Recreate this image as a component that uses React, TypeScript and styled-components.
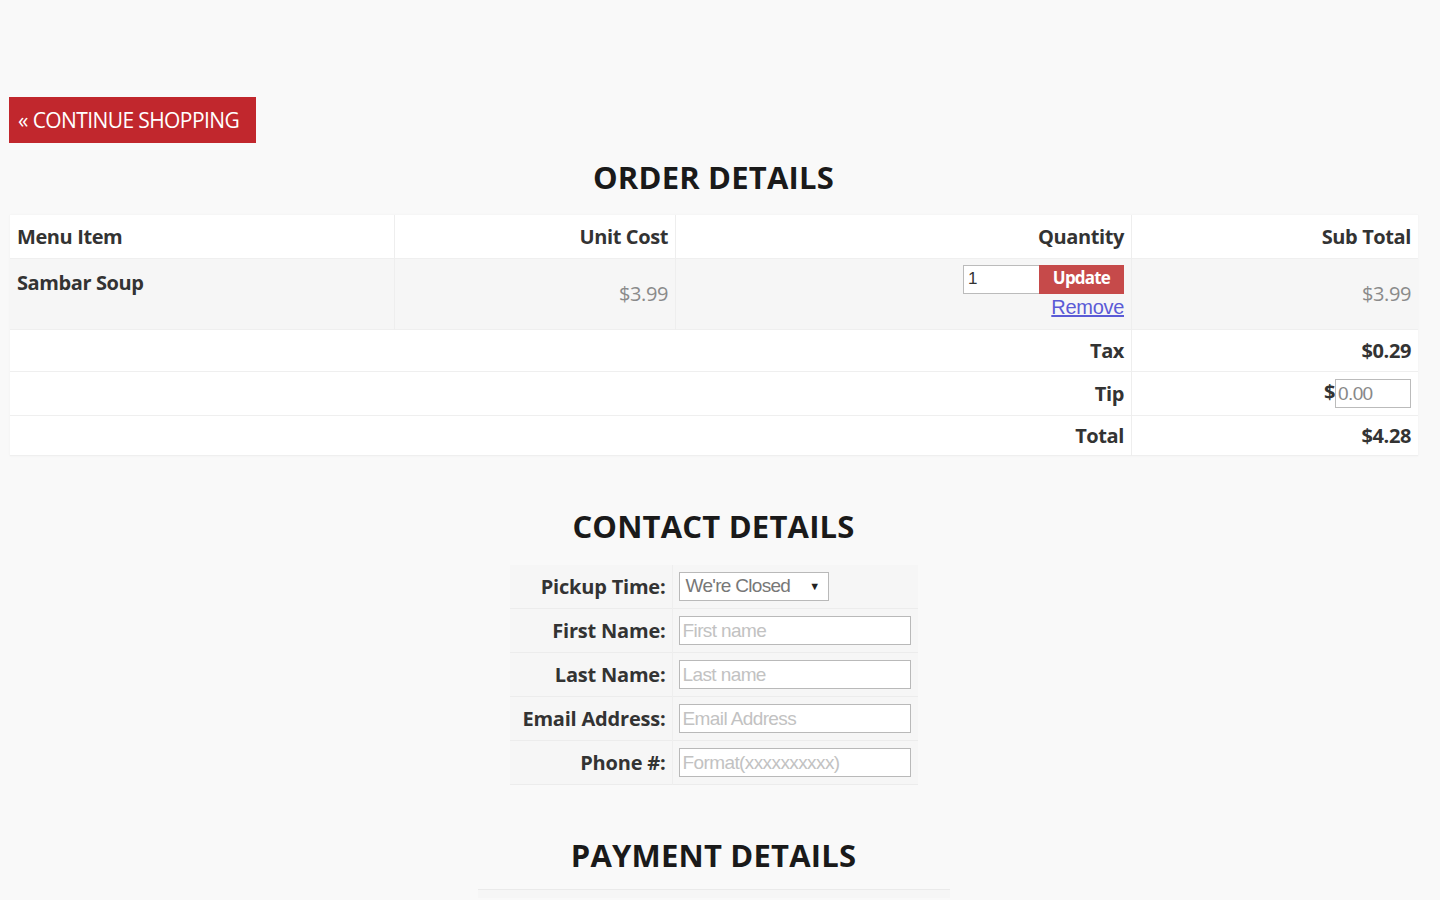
import styled, { createGlobalStyle } from "styled-components";

const GlobalStyle = createGlobalStyle`
  html, body {
    margin: 0;
    padding: 0;
    background: #f9f9f9;
  }
  body {
    font-family: "Open Sans", "Liberation Sans", sans-serif;
    color: #2b2b2b;
  }
`;

const Page = styled.div`
  width: 1440px;
  height: 900px;
  overflow: hidden;
  padding: 97px 22px 0 9px;
  box-sizing: border-box;
`;

const BackButton = styled.button`
  display: block;
  width: 247px;
  height: 46px;
  padding: 0 0 0 9px;
  border: none;
  background: #c1272d;
  color: #fff;
  font-family: "Open Sans", sans-serif;
  font-size: 21px;
  letter-spacing: -0.6px;
  text-align: left;
  cursor: pointer;
`;

const Heading = styled.h2<{ $top: number }>`
  margin: ${(p) => p.$top}px 0 0;
  text-align: center;
  font-size: 31px;
  font-weight: 700;
  line-height: 40px;
  color: #1a1a1a;
  letter-spacing: 0.2px;
`;

const OrderTable = styled.table`
  margin: 18px 0 0 1px;
  width: 1408px;
  border-collapse: collapse;
  background: #fff;
  font-size: 20px;
  box-shadow: 0 0 2px #eee;
`;

const Row = styled.tr<{ $shade?: boolean; $height: number }>`
  height: ${(p) => p.$height}px;
  background: ${(p) => (p.$shade ? "#f6f6f6" : "#fff")};
  border-bottom: 1px solid #efefef;
`;

const Cell = styled.td<{ $align?: string; $bold?: boolean; $muted?: boolean; $width?: number; $top?: number }>`
  width: ${(p) => (p.$width ? `${p.$width}px` : "auto")};
  padding: ${(p) => (p.$top ? `${p.$top}px 7px 0` : "0 7px")};
  vertical-align: ${(p) => (p.$top ? "top" : "middle")};
  text-align: ${(p) => p.$align || "left"};
  font-weight: ${(p) => (p.$bold ? 700 : 400)};
  color: ${(p) => (p.$muted ? "#8a8a8a" : "#333")};
  border-right: 1px solid #eeeeee;
  letter-spacing: -0.4px;
  &:last-child {
    border-right: none;
  }
`;

const QtyBox = styled.div`
  display: flex;
  flex-direction: column;
  align-items: flex-end;
  gap: 2px;
`;

const QtyLine = styled.div`
  display: flex;
  align-items: stretch;
  height: 29px;
`;

const QtyInput = styled.input`
  width: 76px;
  box-sizing: border-box;
  border: 1px solid #bbb;
  border-right: none;
  font-family: "Liberation Sans", Arial, sans-serif;
  font-size: 17px;
  padding: 0 4px;
  color: #333;
  background: #fff;
`;

const UpdateButton = styled.button`
  width: 85px;
  border: none;
  background: #c64a4a;
  color: #fff;
  font-family: "Open Sans", sans-serif;
  font-weight: 700;
  font-size: 17px;
  letter-spacing: -0.8px;
  padding: 0 0 4px;
`;

const RemoveLink = styled.a`
  color: #5b5bd6;
  text-decoration: underline;
  font-family: "Liberation Sans", Arial, sans-serif;
  font-size: 20px;
  letter-spacing: -0.3px;
  cursor: pointer;
`;

const TipInput = styled.input`
  width: 76px;
  height: 29px;
  box-sizing: border-box;
  border: 1px solid #bbb;
  font-family: "Liberation Sans", Arial, sans-serif;
  font-size: 19px;
  color: #888;
  padding: 0 2px;
  vertical-align: middle;
  background: #fff;
  letter-spacing: -0.6px;
`;

const ContactTable = styled.table`
  margin: 19px auto 0;
  border-collapse: collapse;
  background: #f6f6f6;
  position: relative;
  left: 0px;
`;

const FormRow = styled.tr`
  height: 44px;
  border-bottom: 1px solid #ececec;
`;

const Label = styled.td`
  width: 148px;
  padding: 0 6px 0 8px;
  text-align: right;
  font-weight: 700;
  font-size: 20px;
  letter-spacing: -0.2px;
  color: #333;
  border-right: 1px solid #eeeeee;
`;

const Field = styled.td`
  width: 232px;
  padding: 0 7px 0 6px;
`;

const TextInput = styled.input`
  width: 232px;
  height: 29px;
  box-sizing: border-box;
  border: 1px solid #b9b9b9;
  background: #fff;
  font-family: "Liberation Sans", Arial, sans-serif;
  font-size: 19px;
  padding: 0 3px;
  letter-spacing: -0.6px;
  &::placeholder {
    color: #c2c2c2;
  }
`;

const SelectBox = styled.div`
  width: 150px;
  height: 29px;
  box-sizing: border-box;
  border: 1px solid #b9b9b9;
  background: #fff;
  display: flex;
  align-items: center;
  justify-content: space-between;
  padding: 0 8px 0 6px;
  font-family: "Liberation Sans", Arial, sans-serif;
  font-size: 19px;
  color: #777;
  letter-spacing: -0.7px;
`;

const Caret = styled.span`
  font-size: 11px;
  color: #222;
`;

const PaymentEdge = styled.div`
  margin: 14px auto 0;
  width: 472px;
  height: 8px;
  border-top: 1px solid #eaeaea;
  background: #f6f6f6;
`;

export default function App() {
  return (
    <>
      <GlobalStyle />
      <Page>
        <BackButton>« CONTINUE SHOPPING</BackButton>

        <Heading $top={14}>ORDER DETAILS</Heading>
        <OrderTable>
          <tbody>
            <Row $height={43}>
              <Cell $bold $width={370}>Menu Item</Cell>
              <Cell $bold $align="right" $width={266}>Unit Cost</Cell>
              <Cell $bold $align="right" $width={441}>Quantity</Cell>
              <Cell $bold $align="right">Sub Total</Cell>
            </Row>
            <Row $height={71} $shade>
              <Cell $bold $top={10}>Sambar Soup</Cell>
              <Cell $muted $align="right">$3.99</Cell>
              <Cell $align="right" $top={6}>
                <QtyBox>
                  <QtyLine>
                    <QtyInput defaultValue="1" />
                    <UpdateButton>Update</UpdateButton>
                  </QtyLine>
                  <RemoveLink>Remove</RemoveLink>
                </QtyBox>
              </Cell>
              <Cell $muted $align="right">$3.99</Cell>
            </Row>
            <Row $height={42}>
              <Cell $bold $align="right" colSpan={3}>Tax</Cell>
              <Cell $bold $align="right">$0.29</Cell>
            </Row>
            <Row $height={44}>
              <Cell $bold $align="right" colSpan={3}>Tip</Cell>
              <Cell $bold $align="right">
                $<TipInput defaultValue="0.00" />
              </Cell>
            </Row>
            <Row $height={40}>
              <Cell $bold $align="right" colSpan={3}>Total</Cell>
              <Cell $bold $align="right">$4.28</Cell>
            </Row>
          </tbody>
        </OrderTable>

        <Heading $top={50}>CONTACT DETAILS</Heading>
        <ContactTable>
          <tbody>
            <FormRow>
              <Label>Pickup Time:</Label>
              <Field>
                <SelectBox>
                  We're Closed <Caret>▼</Caret>
                </SelectBox>
              </Field>
            </FormRow>
            <FormRow>
              <Label>First Name:</Label>
              <Field>
                <TextInput placeholder="First name" />
              </Field>
            </FormRow>
            <FormRow>
              <Label>Last Name:</Label>
              <Field>
                <TextInput placeholder="Last name" />
              </Field>
            </FormRow>
            <FormRow>
              <Label>Email Address:</Label>
              <Field>
                <TextInput placeholder="Email Address" />
              </Field>
            </FormRow>
            <FormRow>
              <Label>Phone #:</Label>
              <Field>
                <TextInput placeholder="Format(xxxxxxxxxx)" />
              </Field>
            </FormRow>
          </tbody>
        </ContactTable>

        <Heading $top={50}>PAYMENT DETAILS</Heading>
        <PaymentEdge />
      </Page>
    </>
  );
}
